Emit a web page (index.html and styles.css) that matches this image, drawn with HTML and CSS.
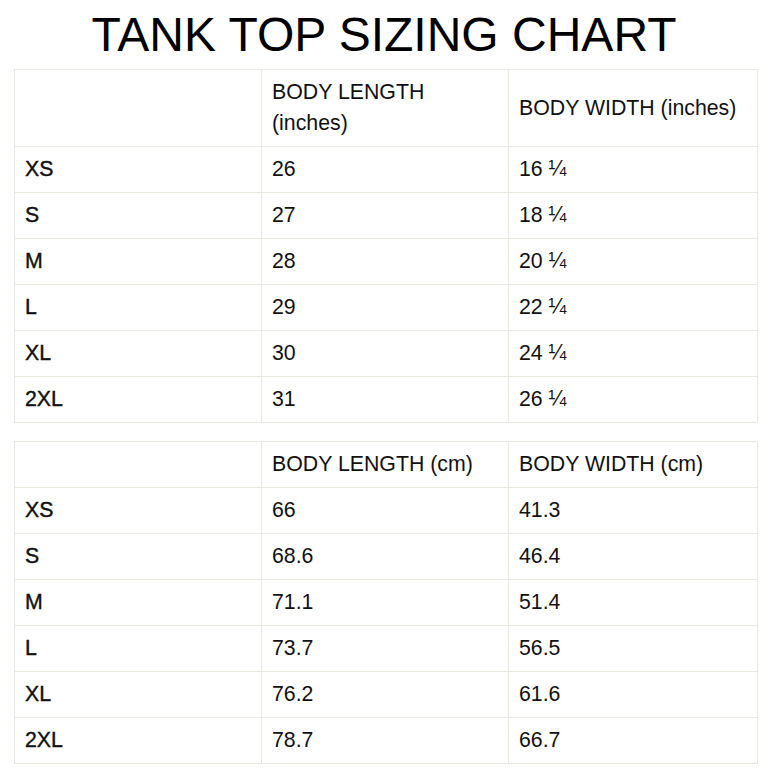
FILE: index.html
```html
<!DOCTYPE html>
<html>
<head>
<meta charset="utf-8">
<link rel="stylesheet" href="styles.css">
</head>
<body>
<div class="page">
  <h1 class="title">TANK TOP SIZING CHART</h1>
  <table class="chart">
    <colgroup><col class="c1"><col class="c2"><col class="c3"></colgroup>
    <tr class="head"><td></td><td>BODY LENGTH<br>(inches)</td><td>BODY WIDTH (inches)</td></tr>
    <tr><td class="size">XS</td><td>26</td><td>16 ¼</td></tr>
    <tr><td class="size">S</td><td>27</td><td>18 ¼</td></tr>
    <tr><td class="size">M</td><td>28</td><td>20 ¼</td></tr>
    <tr><td class="size">L</td><td>29</td><td>22 ¼</td></tr>
    <tr><td class="size">XL</td><td>30</td><td>24 ¼</td></tr>
    <tr><td class="size">2XL</td><td>31</td><td>26 ¼</td></tr>
  </table>
  <table class="chart second">
    <colgroup><col class="c1"><col class="c2"><col class="c3"></colgroup>
    <tr class="head single"><td></td><td>BODY LENGTH (cm)</td><td>BODY WIDTH (cm)</td></tr>
    <tr><td class="size">XS</td><td>66</td><td>41.3</td></tr>
    <tr><td class="size">S</td><td>68.6</td><td>46.4</td></tr>
    <tr><td class="size">M</td><td>71.1</td><td>51.4</td></tr>
    <tr><td class="size">L</td><td>73.7</td><td>56.5</td></tr>
    <tr><td class="size">XL</td><td>76.2</td><td>61.6</td></tr>
    <tr><td class="size">2XL</td><td>78.7</td><td>66.7</td></tr>
  </table>
</div>
</body>
</html>
```
FILE: styles.css
```css
html, body {
  margin: 0;
  padding: 0;
  background: #ffffff;
}
.page {
  width: 768px;
  padding-top: 8px;
  font-family: "Liberation Sans", Arial, sans-serif;
  color: #111111;
}
.title {
  margin: 0;
  text-align: center;
  font-weight: normal;
  font-size: 48px;
  line-height: 54px;
  color: #000000;
}
.chart {
  margin: 7px 0 0 14px;
  width: 743px;
  border-collapse: collapse;
  table-layout: fixed;
  font-size: 21.3px;
}
.chart.second {
  margin-top: 18px;
}
.c1 { width: 247px; }
.c2 { width: 247px; }
.c3 { width: 249px; }
.chart td {
  border: 1px solid #e9e7df;
  height: 46px;
  padding: 0 10px;
  vertical-align: middle;
  line-height: 31px;
  box-sizing: border-box;
}
.chart tr.head td {
  height: 77px;
  padding-top: 7px;
  padding-bottom: 7px;
}
.chart tr.head.single td {
  height: 46px;
  padding: 0 10px;
}
.chart td.size {
  -webkit-text-stroke: 0.4px #111111;
}
```
